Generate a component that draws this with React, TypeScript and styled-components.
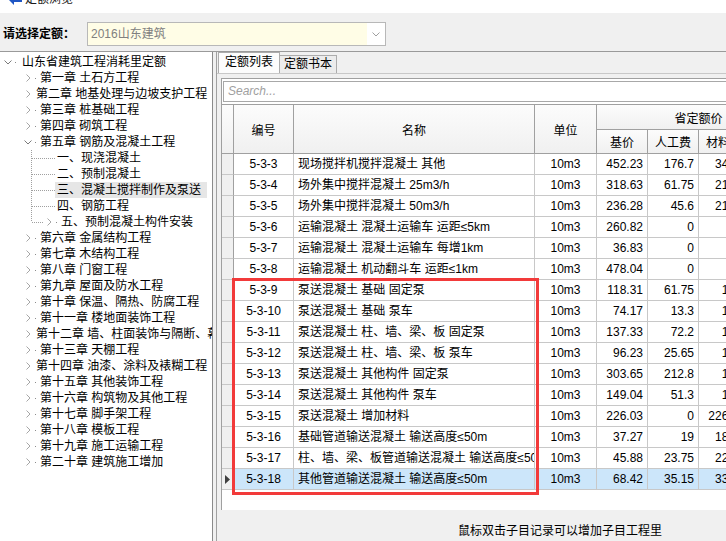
import React from 'react';
import styled, { createGlobalStyle } from 'styled-components';

const GlobalStyle = createGlobalStyle`
  html, body {
    margin: 0;
    padding: 0;
  }
  body {
    background: #f0f0f0;
    font-family: "Liberation Sans", "Noto Sans CJK SC", sans-serif;
    font-size: 12px;
    color: #000;
    overflow: hidden;
  }
  * {
    box-sizing: border-box;
  }
`;

type TreeItem = {
  label: string;
  level: 0 | 1 | 2;
  state: 'open' | 'closed' | 'none';
  last?: boolean;
  selected?: boolean;
};

const tree: TreeItem[] = [
  { label: '山东省建筑工程消耗里定额', level: 0, state: 'open' },
  { label: '第一章 土石方工程', level: 1, state: 'closed' },
  { label: '第二章 地基处理与边坡支护工程', level: 1, state: 'closed' },
  { label: '第三章 桩基础工程', level: 1, state: 'closed' },
  { label: '第四章 砌筑工程', level: 1, state: 'closed' },
  { label: '第五章 钢筋及混凝土工程', level: 1, state: 'open' },
  { label: '一、现浇混凝土', level: 2, state: 'none' },
  { label: '二、预制混凝土', level: 2, state: 'none' },
  { label: '三、混凝土搅拌制作及泵送', level: 2, state: 'none', selected: true },
  { label: '四、钢筋工程', level: 2, state: 'none' },
  { label: '五、预制混凝土构件安装', level: 2, state: 'closed', last: true },
  { label: '第六章 金属结构工程', level: 1, state: 'closed' },
  { label: '第七章 木结构工程', level: 1, state: 'closed' },
  { label: '第八章 门窗工程', level: 1, state: 'closed' },
  { label: '第九章 屋面及防水工程', level: 1, state: 'closed' },
  { label: '第十章 保温、隔热、防腐工程', level: 1, state: 'closed' },
  { label: '第十一章 楼地面装饰工程', level: 1, state: 'closed' },
  { label: '第十二章 墙、柱面装饰与隔断、幕墙工程', level: 1, state: 'closed' },
  { label: '第十三章 天棚工程', level: 1, state: 'closed' },
  { label: '第十四章 油漆、涂料及裱糊工程', level: 1, state: 'closed' },
  { label: '第十五章 其他装饰工程', level: 1, state: 'closed' },
  { label: '第十六章 构筑物及其他工程', level: 1, state: 'closed' },
  { label: '第十七章 脚手架工程', level: 1, state: 'closed' },
  { label: '第十八章 模板工程', level: 1, state: 'closed' },
  { label: '第十九章 施工运输工程', level: 1, state: 'closed' },
  { label: '第二十章 建筑施工增加', level: 1, state: 'closed' },
];

type QuotaRow = {
  code: string;
  name: string;
  base: string;
  labor: string;
  mat: string;
  mach: string;
};

const rows: QuotaRow[] = [
  { code: '5-3-3', name: '现场搅拌机搅拌混凝土 其他', base: '452.23', labor: '176.7', mat: '34.91', mach: '240.62' },
  { code: '5-3-4', name: '场外集中搅拌混凝土 25m3/h', base: '318.63', labor: '61.75', mat: '21.06', mach: '235.82' },
  { code: '5-3-5', name: '场外集中搅拌混凝土 50m3/h', base: '236.28', labor: '45.6', mat: '21.06', mach: '169.62' },
  { code: '5-3-6', name: '运输混凝土 混凝土运输车 运距≤5km', base: '260.82', labor: '0', mat: '0', mach: '260.82' },
  { code: '5-3-7', name: '运输混凝土 混凝土运输车 每增1km', base: '36.83', labor: '0', mat: '0', mach: '36.83' },
  { code: '5-3-8', name: '运输混凝土 机动翻斗车 运距≤1km', base: '478.04', labor: '0', mat: '0', mach: '478.04' },
  { code: '5-3-9', name: '泵送混凝土 基础 固定泵', base: '118.31', labor: '61.75', mat: '1.52', mach: '55.04' },
  { code: '5-3-10', name: '泵送混凝土 基础 泵车', base: '74.17', labor: '13.3', mat: '1.35', mach: '59.52' },
  { code: '5-3-11', name: '泵送混凝土 柱、墙、梁、板 固定泵', base: '137.33', labor: '72.2', mat: '1.52', mach: '63.61' },
  { code: '5-3-12', name: '泵送混凝土 柱、墙、梁、板 泵车', base: '96.23', labor: '25.65', mat: '1.35', mach: '69.23' },
  { code: '5-3-13', name: '泵送混凝土 其他构件 固定泵', base: '303.65', labor: '212.8', mat: '1.52', mach: '89.33' },
  { code: '5-3-14', name: '泵送混凝土 其他构件 泵车', base: '149.04', labor: '51.3', mat: '1.35', mach: '96.39' },
  { code: '5-3-15', name: '泵送混凝土 增加材料', base: '226.03', labor: '0', mat: '226.03', mach: '0' },
  { code: '5-3-16', name: '基础管道输送混凝土 输送高度≤50m', base: '37.27', labor: '19', mat: '18.27', mach: '0' },
  { code: '5-3-17', name: '柱、墙、梁、板管道输送混凝土 输送高度≤50m', base: '45.88', labor: '23.75', mat: '22.13', mach: '0' },
  { code: '5-3-18', name: '其他管道输送混凝土 输送高度≤50m', base: '68.42', labor: '35.15', mat: '33.27', mach: '0' },
];

const SELECTED = '5-3-18';
const COLS = '12px 60px 241px 62px 51px 51px 51px 51px';

const ChevronRight = () => (
  <svg width="5" height="8" viewBox="0 0 5 8">
    <path d="M0.5 0.5 L4 4 L0.5 7.5" fill="none" stroke="#a6a6a6" />
  </svg>
);

const ChevronDown = ({ color = '#7a7a7a' }: { color?: string }) => (
  <svg width="8" height="5" viewBox="0 0 8 5">
    <path d="M0.5 0.5 L4 4 L7.5 0.5" fill="none" stroke={color} />
  </svg>
);

const Dot = ({ width }: { width: number }) => (
  <svg width={width} height="16" viewBox={`0 0 ${width} 16`}>
    <rect x="1" y="8" width="1" height="1" fill="#8c8c8c" />
  </svg>
);

const Guide = ({ width, last }: { width: number; last?: boolean }) => (
  <svg width={width} height="16" viewBox={`0 0 ${width} 16`}>
    <line x1="0.5" y1="0" x2="0.5" y2={last ? 8 : 16} stroke="#a0a0a0" strokeDasharray="1 1" />
    <line x1="1" y1="8.5" x2={width} y2="8.5" stroke="#a0a0a0" strokeDasharray="1 1" />
  </svg>
);

const App = () => {
  return (
    <>
      <GlobalStyle />
      <Window>
        <TitleBar>
          <TitleIcon width="16" height="16" viewBox="0 0 16 16">
            <path d="M1 9 L7 3 L7 6 L15 6 L15 12 L7 12 L7 15 Z" fill="#1f56c4" />
          </TitleIcon>
          <TitleText>定额浏览</TitleText>
        </TitleBar>

        <SelectorRow>
          <SelectorLabel>请选择定额：</SelectorLabel>
          <Combo>
            <ComboText>2016山东建筑</ComboText>
            <ComboButton>
              <ChevronDown color="#a0a0a0" />
            </ComboButton>
          </Combo>
        </SelectorRow>

        <Main>
          <TreePanel>
            {tree.map((item) => {
              if (item.level === 2) {
                return (
                  <TreeRow key={item.label} $indent={31}>
                    <Guide width={item.state === 'closed' ? 12 : 24} last={item.last} />
                    {item.state === 'closed' && (
                      <>
                        <Expander>
                          <ChevronRight />
                        </Expander>
                        <Dot width={4} />
                      </>
                    )}
                    <TreeLabel $selected={item.selected}>{item.label}</TreeLabel>
                  </TreeRow>
                );
              }
              return (
                <TreeRow key={item.label} $indent={item.level === 0 ? 2 : 22}>
                  <Expander>{item.state === 'open' ? <ChevronDown /> : <ChevronRight />}</Expander>
                  <Dot width={item.level === 0 ? 6 : 4} />
                  <TreeLabel>{item.label}</TreeLabel>
                </TreeRow>
              );
            })}
          </TreePanel>

          <Splitter />

          <RightPanel>
            <TabStrip>
              <Tab $active>定额列表</Tab>
              <Tab>定额书本</Tab>
            </TabStrip>
            <TabPage>
              <ListBox>
                <SearchBox>Search...</SearchBox>
                <GridWrap>
                  <HeaderGrid>
                    <HeadCell $col="1" $row="1 / span 2" />
                    <HeadCell $col="2" $row="1 / span 2">编号</HeadCell>
                    <HeadCell $col="3" $row="1 / span 2">名称</HeadCell>
                    <HeadCell $col="4" $row="1 / span 2">单位</HeadCell>
                    <HeadCell $col="5 / span 4" $row="1">省定额价</HeadCell>
                    <HeadCell $col="5" $row="2">基价</HeadCell>
                    <HeadCell $col="6" $row="2">人工费</HeadCell>
                    <HeadCell $col="7" $row="2">材料费</HeadCell>
                    <HeadCell $col="8" $row="2">机械费</HeadCell>
                  </HeaderGrid>

                  {rows.map((r) => {
                    const sel = r.code === SELECTED;
                    return (
                      <BodyRow key={r.code}>
                        <IndicatorCell>
                          {sel && (
                            <svg width="5" height="9" viewBox="0 0 5 9">
                              <path d="M0 0 L5 4.5 L0 9 Z" fill="#404040" />
                            </svg>
                          )}
                        </IndicatorCell>
                        <Cell $align="center" $selected={sel}>{r.code}</Cell>
                        <Cell $align="left" $selected={sel}>{r.name}</Cell>
                        <Cell $align="center" $selected={sel}>10m3</Cell>
                        <Cell $align="right" $selected={sel}>{r.base}</Cell>
                        <Cell $align="right" $selected={sel}>{r.labor}</Cell>
                        <Cell $align="right" $selected={sel}>{r.mat}</Cell>
                        <Cell $align="right" $selected={sel}>{r.mach}</Cell>
                      </BodyRow>
                    );
                  })}

                  <RedBox />
                </GridWrap>
              </ListBox>
              <Footer>鼠标双击子目记录可以增加子目工程里</Footer>
            </TabPage>
          </RightPanel>
        </Main>
      </Window>
    </>
  );
};

export default App;

const Window = styled.div`
  width: 726px;
  height: 541px;
  display: flex;
  flex-direction: column;
  overflow: hidden;
`;

const TitleBar = styled.div`
  height: 13px;
  flex: none;
  background: #fff;
  overflow: hidden;
  display: flex;
  align-items: flex-start;
  padding-left: 7px;
  gap: 2px;
`;

const TitleIcon = styled.svg`
  margin-top: -10px;
  flex: none;
`;

const TitleText = styled.span`
  margin-top: -9px;
  line-height: 16px;
  color: #1a1a1a;
`;

const SelectorRow = styled.div`
  height: 38px;
  flex: none;
  display: flex;
  align-items: center;
  padding: 4px 0 0 3px;
`;

const SelectorLabel = styled.label`
  font-weight: bold;
  margin-right: 12px;
  line-height: 16px;
`;

const Combo = styled.div`
  width: 299px;
  height: 24px;
  display: flex;
  border: 1px solid #b8b8b8;
  background: #fff;
`;

const ComboText = styled.div`
  flex: 1;
  background: #fffde6;
  color: #808080;
  padding-left: 3px;
  line-height: 22px;
  font-size: 12px;
`;

const ComboButton = styled.div`
  width: 18px;
  display: flex;
  align-items: center;
  justify-content: center;
`;

const Main = styled.div`
  flex: 1;
  min-height: 0;
  display: flex;
  border-top: 1px solid #9a9a9a;
`;

const TreePanel = styled.div`
  width: 213px;
  flex: none;
  background: #fff;
  border-right: 1px solid #8a8a8a;
  padding-top: 2px;
  overflow: hidden;
`;

const TreeRow = styled.div<{ $indent: number }>`
  display: flex;
  align-items: center;
  height: 16px;
  padding-left: ${(p) => p.$indent}px;
  white-space: nowrap;
`;

const Expander = styled.span`
  width: 12px;
  height: 16px;
  flex: none;
  display: flex;
  align-items: center;
  justify-content: center;
`;

const TreeLabel = styled.span<{ $selected?: boolean }>`
  line-height: 16px;
  padding: 0 6px 0 2px;
  background: ${(p) => (p.$selected ? '#e6e6e6' : 'transparent')};
`;

const Splitter = styled.div`
  width: 3px;
  flex: none;
`;

const RightPanel = styled.div`
  flex: 1;
  min-width: 0;
  display: flex;
  flex-direction: column;
  border-left: 1px solid #a0a0a0;
  overflow: hidden;
`;

const TabStrip = styled.div`
  height: 21px;
  flex: none;
  display: flex;
  align-items: flex-end;
  padding-left: 1px;
`;

const Tab = styled.div<{ $active?: boolean }>`
  height: ${(p) => (p.$active ? 21 : 18)}px;
  padding: 0 ${(p) => (p.$active ? 6 : 4)}px;
  line-height: ${(p) => (p.$active ? 19 : 17)}px;
  border: 1px solid #acacac;
  border-bottom: none;
  margin-right: ${(p) => (p.$active ? -1 : 0)}px;
  background: ${(p) => (p.$active ? '#fcfcfc' : '#ececec')};
  position: ${(p) => (p.$active ? 'relative' : 'static')};
  z-index: ${(p) => (p.$active ? 1 : 0)};
`;

const TabPage = styled.div`
  flex: 1;
  min-height: 0;
  display: flex;
  flex-direction: column;
  border-top: 1px solid #c8c8c8;
`;

const ListBox = styled.div`
  height: 432px;
  flex: none;
  margin: 4px 0 0 4px;
  border: 1px solid #a0a0a0;
  border-right: none;
  border-bottom: none;
  background: #fff;
  overflow: hidden;
  display: flex;
  flex-direction: column;
`;

const SearchBox = styled.div`
  height: 21px;
  flex: none;
  margin: 2px 0 2px 1px;
  border: 1px solid #a8a8a8;
  border-right: none;
  padding-left: 4px;
  line-height: 19px;
  color: #a0a0a0;
  font-style: italic;
`;

const GridWrap = styled.div`
  position: relative;
  flex: 1;
  width: 578px;
`;

const HeaderGrid = styled.div`
  display: grid;
  grid-template-columns: ${COLS};
  grid-template-rows: 25px 24px;
  border-top: 1px solid #a0a0a0;
`;

const HeadCell = styled.div<{ $col: string; $row: string }>`
  grid-column: ${(p) => p.$col};
  grid-row: ${(p) => p.$row};
  display: flex;
  align-items: center;
  justify-content: center;
  border-right: 1px solid #a0a0a0;
  border-bottom: 1px solid #a0a0a0;
  background: linear-gradient(#fcfcfc, #f0f0f0);
  white-space: nowrap;
  overflow: hidden;
`;

const BodyRow = styled.div`
  display: grid;
  grid-template-columns: ${COLS};
  height: 21px;
`;

const IndicatorCell = styled.div`
  border-right: 1px solid #a0a0a0;
  border-bottom: 1px solid #c8c8c8;
  background: #f0f0f0;
  display: flex;
  align-items: center;
  justify-content: center;
`;

const Cell = styled.div<{ $align: 'left' | 'center' | 'right'; $selected?: boolean }>`
  border-right: 1px solid #c8c8c8;
  border-bottom: 1px solid #c8c8c8;
  background: ${(p) => (p.$selected ? '#cce6fa' : '#fff')};
  text-align: ${(p) => p.$align};
  padding: 0 4px;
  line-height: 20px;
  white-space: nowrap;
  overflow: hidden;
`;

const RedBox = styled.div`
  position: absolute;
  left: 10px;
  top: 174px;
  width: 307px;
  height: 217px;
  border: 3px solid #f23a3a;
  pointer-events: none;
`;

const Footer = styled.div`
  flex: 1;
  padding: 13px 0 0 241px;
  line-height: 16px;
  white-space: nowrap;
`;
